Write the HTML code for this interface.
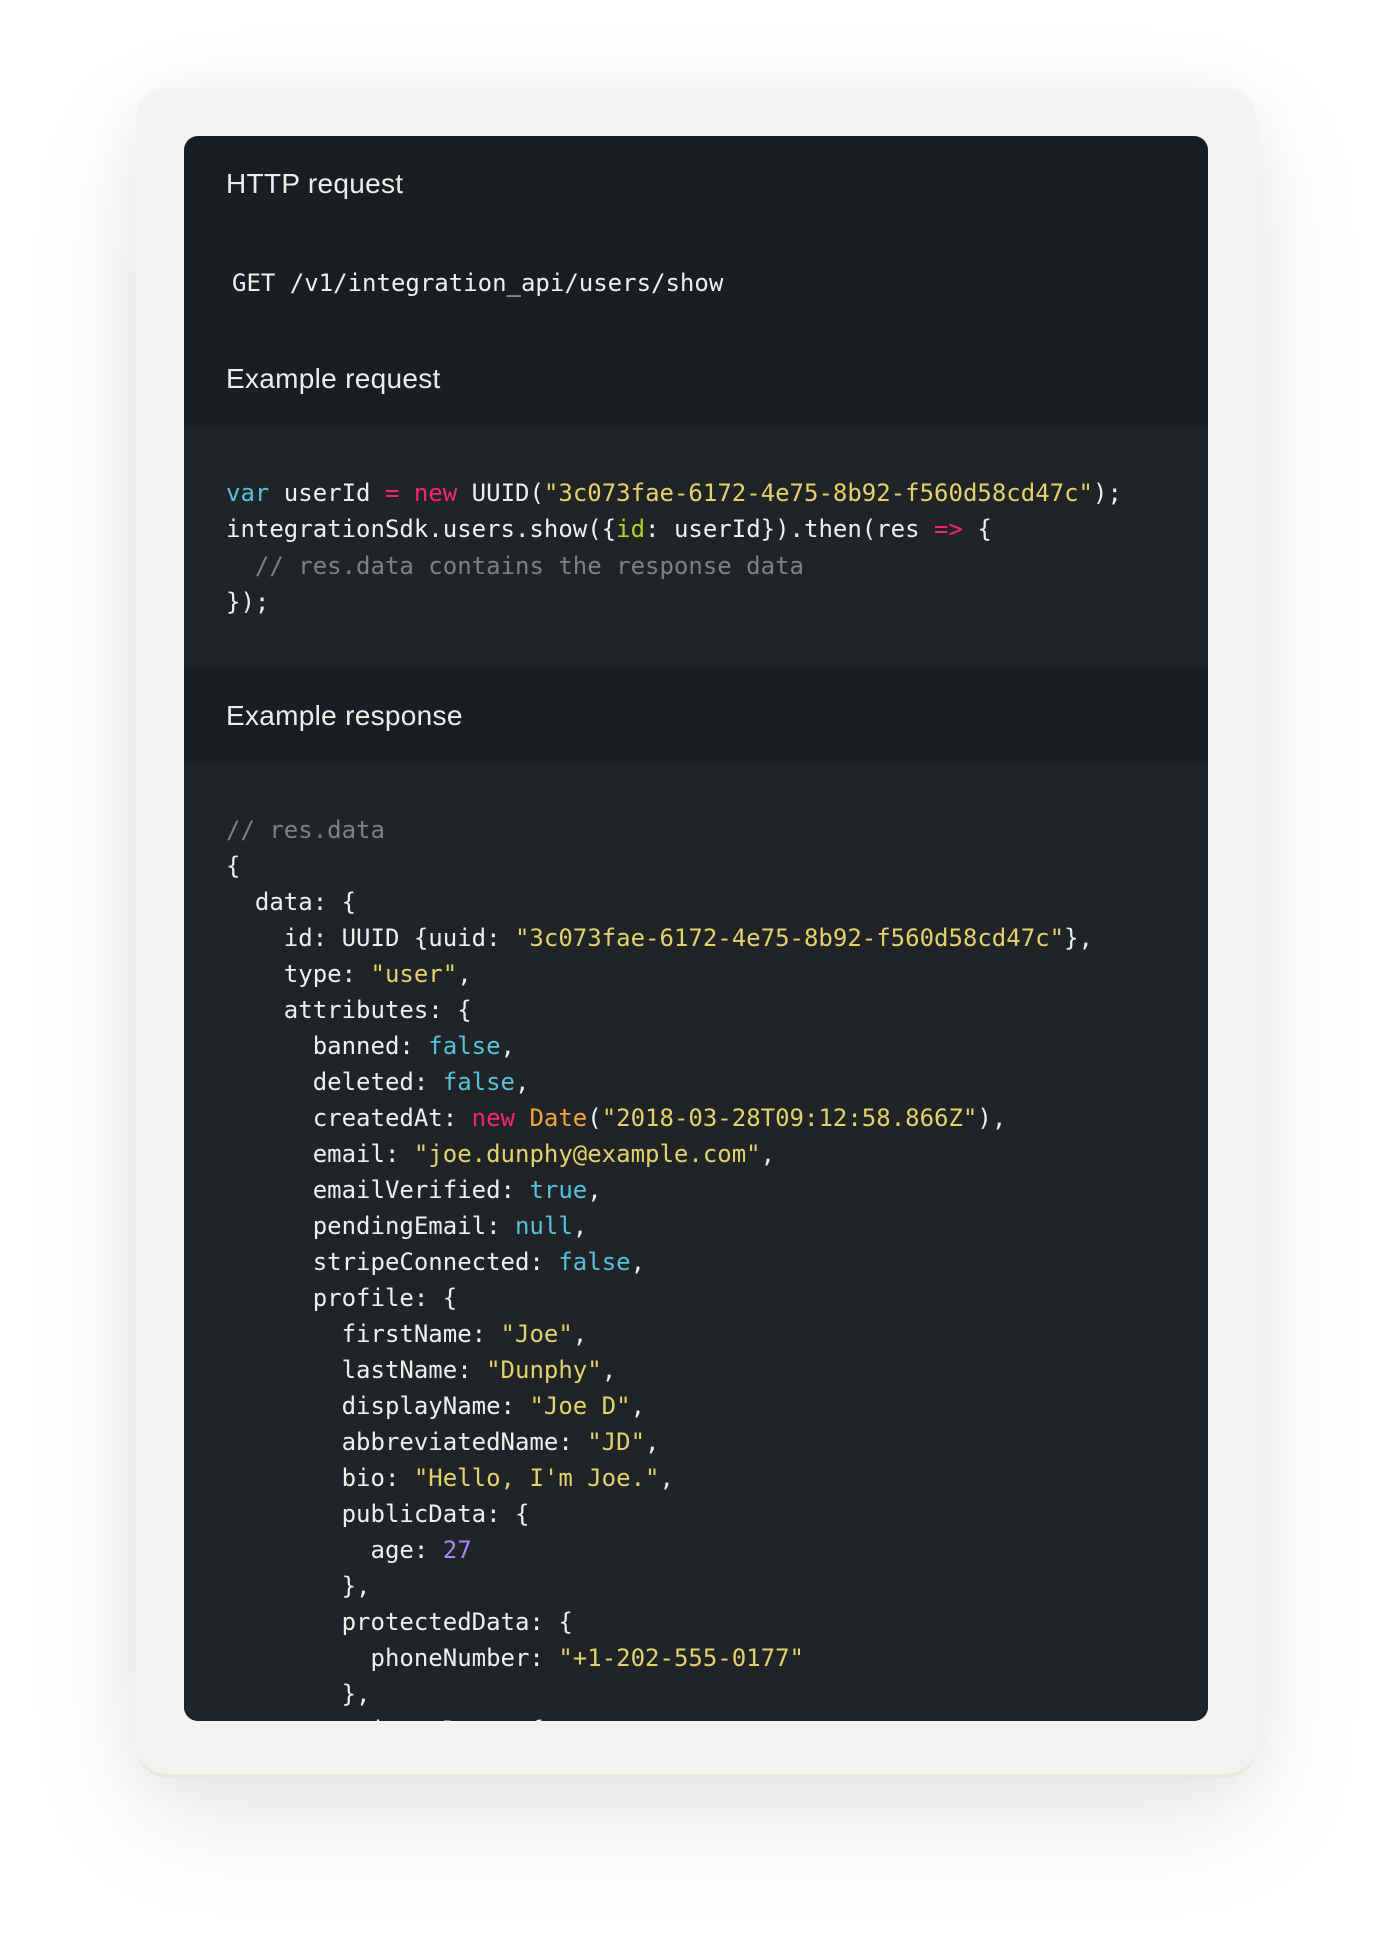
<!DOCTYPE html>
<html><head><meta charset="utf-8"><style>
html,body{margin:0;padding:0;background:#fff;width:1392px;height:1952px;overflow:hidden;position:relative}
.card{position:absolute;left:136px;top:88px;width:1121px;height:1690px;background:#f2f2f0;border-radius:32px;box-shadow:0 40px 120px rgba(0,0,0,0.10),0 0 60px rgba(0,0,0,0.04);border-bottom:4px solid #ece7df;box-sizing:border-box}
.panel{position:absolute;left:184px;top:136px;width:1024px;height:1585px;background:#1b1e21;border-radius:14px;overflow:hidden}
.h{position:absolute;left:42px;font:28px/36px "Liberation Sans",sans-serif;letter-spacing:0.3px;color:#eceeee}
pre{margin:0;position:absolute;left:42px;font:24px/36px "DejaVu Sans Mono","Liberation Mono",monospace;color:#eef0f0;white-space:pre}
.cb{position:absolute;left:0;width:1024px;background:#202427}
.k{color:#56c1dc}.n{color:#f5256f}.s{color:#e3d26c}.g{color:#a6d92a}.c{color:#7d8186}.o{color:#f3a53a}.p{color:#a687f0}
</style></head><body>
<div class="card"></div>
<div class="panel">
<div class="h" style="top:30px">HTTP request</div>
<pre style="left:48px;top:129px;line-height:36px">GET /v1/integration_api/users/show</pre>
<div class="h" style="top:225px">Example request</div>
<div class="cb" style="top:292px;height:239px">
<pre style="top:47px;line-height:36.3px"><span class="k">var</span> userId <span class="n">=</span> <span class="n">new</span> UUID(<span class="s">"3c073fae-6172-4e75-8b92-f560d58cd47c"</span>);
integrationSdk.users.show({<span class="g">id</span>: userId}).then(res <span class="n">=&gt;</span> {
  <span class="c">// res.data contains the response data</span>
});</pre>
</div>
<div class="h" style="top:562px">Example response</div>
<div class="cb" style="top:628px;height:963px">
<pre style="top:48px"><span class="c">// res.data</span>
{
  data: {
    id: UUID {uuid: <span class="s">"3c073fae-6172-4e75-8b92-f560d58cd47c"</span>},
    type: <span class="s">"user"</span>,
    attributes: {
      banned: <span class="k">false</span>,
      deleted: <span class="k">false</span>,
      createdAt: <span class="n">new</span> <span class="o">Date</span>(<span class="s">"2018-03-28T09:12:58.866Z"</span>),
      email: <span class="s">"joe.dunphy@example.com"</span>,
      emailVerified: <span class="k">true</span>,
      pendingEmail: <span class="k">null</span>,
      stripeConnected: <span class="k">false</span>,
      profile: {
        firstName: <span class="s">"Joe"</span>,
        lastName: <span class="s">"Dunphy"</span>,
        displayName: <span class="s">"Joe D"</span>,
        abbreviatedName: <span class="s">"JD"</span>,
        bio: <span class="s">"Hello, I'm Joe."</span>,
        publicData: {
          age: <span class="p">27</span>
        },
        protectedData: {
          phoneNumber: <span class="s">"+1-202-555-0177"</span>
        },
        privateData: {
        }
      }
    }
  }
}</pre>
</div>
</div>
</body></html>
